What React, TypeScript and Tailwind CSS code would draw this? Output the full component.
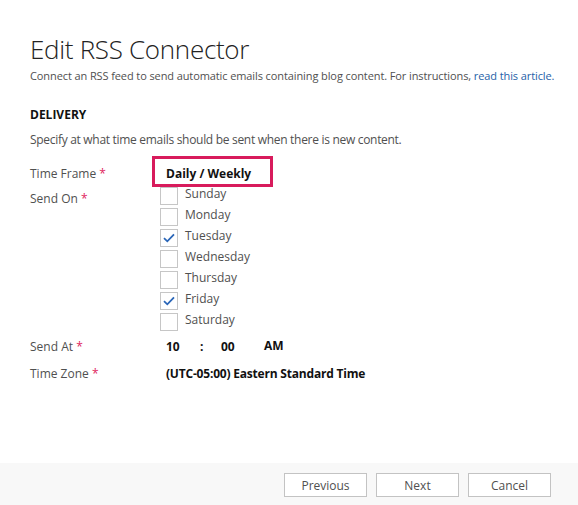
import React from 'react';

const days = [
  { name: 'Sunday', checked: false },
  { name: 'Monday', checked: false },
  { name: 'Tuesday', checked: true },
  { name: 'Wednesday', checked: false },
  { name: 'Thursday', checked: false },
  { name: 'Friday', checked: true },
  { name: 'Saturday', checked: false },
];

function Label({ text }: { text: string }) {
  return (
    <div className="w-[130px] shrink-0 text-[12px] leading-[18px] text-[#505050]">
      {text} <span className="text-[#e0245e]">*</span>
    </div>
  );
}

function Checkbox({ checked }: { checked: boolean }) {
  return (
    <div className="w-[18px] h-[18px] border border-[#c6c6c6] bg-white flex items-center justify-center">
      {checked && (
        <svg width="12" height="10" viewBox="0 0 12 10" fill="none">
          <path d="M1 5.2 L4.3 8.3 L11 1.3" stroke="#2a66b8" strokeWidth="1.8" />
        </svg>
      )}
    </div>
  );
}

export default function App() {
  return (
    <div
      className="w-[578px] h-[505px] flex flex-col bg-white text-[#444]"
      style={{ fontFamily: '"Open Sans", "Noto Sans", sans-serif' }}
    >
      <main className="flex-1 px-[30px] pt-[32px]">
        <h1 className="text-[26px] font-light leading-[35px] text-[#222] tracking-[-0.3px]">Edit RSS Connector</h1>
        <p className="whitespace-nowrap text-[11px] leading-[18px] text-[#505050] tracking-[-0.1px]">
          Connect an RSS feed to send automatic emails containing blog content. For instructions,{' '}
          <a className="text-[#1f5fa8]">read this article.</a>
        </p>

        <h2 className="mt-[21px] text-[12px] font-bold leading-[18px] text-[#111]">DELIVERY</h2>
        <p className="mt-[7px] text-[12px] leading-[18px] text-[#505050] tracking-[-0.3px]">
          Specify at what time emails should be sent when there is new content.
        </p>

        <div className="mt-[7px] flex items-start">
          <div className="pt-[9px]">
            <Label text="Time Frame" />
          </div>
          <div className="-ml-[8px] w-[121px] h-[31px] border-[3px] border-[#d81b5c] pt-[6px] pl-[11px] text-[12px] leading-[18px] font-bold text-[#111]">
            Daily / Weekly
          </div>
        </div>

        <div className="flex items-start">
          <div className="pt-[3px]">
            <Label text="Send On" />
          </div>
          <div className="flex flex-col gap-[3px]">
            {days.map((d) => (
              <div key={d.name} className="flex items-start gap-[7px]">
                <Checkbox checked={d.checked} />
                <span className="text-[12px] leading-[14px] text-[#505050]">{d.name}</span>
              </div>
            ))}
          </div>
        </div>

        <div className="mt-[7px] flex items-center h-[18px]">
          <Label text="Send At" />
          <div className="flex items-center text-[12px] leading-[18px] font-bold text-[#111]">
            <span className="ml-[6px] w-[34px]">10</span>
            <span className="w-[21px]">:</span>
            <span className="w-[43px]">00</span>
            <span className="-mt-[2px]">AM</span>
          </div>
        </div>

        <div className="mt-[9px] flex items-center h-[18px]">
          <Label text="Time Zone" />
          <div className="ml-[6px] text-[12px] leading-[18px] font-bold text-[#111] tracking-[-0.2px]">(UTC-05:00) Eastern Standard Time</div>
        </div>
      </main>

      <footer className="h-[42px] bg-[#f8f8f8] flex items-start justify-end gap-[9px] pt-[10px] pr-[27px]">
        {['Previous', 'Next', 'Cancel'].map((b) => (
          <button
            key={b}
            className="w-[83px] h-[24px] border border-[#c3c3c3] bg-white text-[12px] leading-[24px] text-[#505050]"
          >
            {b}
          </button>
        ))}
      </footer>
    </div>
  );
}
